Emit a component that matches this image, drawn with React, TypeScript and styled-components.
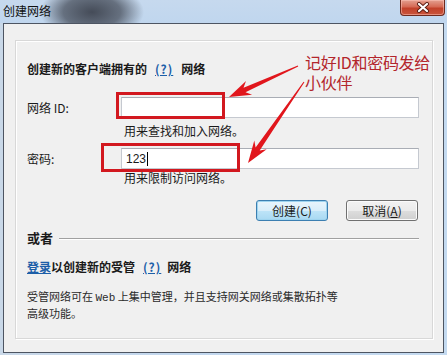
import styled, { createGlobalStyle } from "styled-components";

const GlobalStyle = createGlobalStyle`
  html, body {
    margin: 0;
    padding: 0;
    overflow: hidden;
    background: #c4d9ef;
  }
`;

const Window = styled.div`
  position: relative;
  width: 447px;
  height: 355px;
  display: flex;
  flex-direction: column;
  background: linear-gradient(90deg, #c9d8e8 0%, #c2d7ee 40%, #c4daf0 100%);
  font-family: "Noto Sans CJK SC", "Noto Sans", sans-serif;
  font-size: 12px;
  color: #1a1a1a;
  overflow: hidden;
`;

const TitleBar = styled.div`
  height: 23px;
  flex-shrink: 0;
  display: flex;
  justify-content: space-between;
  align-items: flex-start;
  background:
    radial-gradient(ellipse 52px 28px at 92px 12px, rgba(62, 68, 80, 0.95), rgba(62, 68, 80, 0.7) 55%, rgba(62, 68, 80, 0) 100%),
    linear-gradient(180deg, #c6d9ee 0%, #c0d6ee 100%);
`;

const Title = styled.span`
  padding: 3px 0 0 3px;
  font-size: 12px;
  line-height: 16px;
  color: #111;
`;

const CloseButton = styled.div`
  width: 45px;
  height: 16px;
  margin-right: 2px;
  box-sizing: border-box;
  border: 1px solid #6e2a1e;
  border-top: none;
  border-radius: 0 0 4px 4px;
  background: linear-gradient(180deg, #e4a090 0%, #d66a55 45%, #c2412a 55%, #c9553c 100%);
  display: flex;
  align-items: center;
  justify-content: center;
  box-shadow: inset 0 0 0 1px rgba(255, 200, 190, 0.5);
`;

const Frame = styled.div`
  flex: 1;
  display: flex;
  padding: 0 3px 2px 3px;
`;

const Client = styled.div`
  flex: 1;
  display: flex;
  border: 1px solid #4d5562;
  background: #f0f0f0;
  padding: 16px 10px 13px 11px;
`;

const Panel = styled.div`
  flex: 1;
  display: flex;
  flex-direction: column;
  border: 1px solid #d8d8d8;
  box-shadow: inset 1px 1px 0 #ffffff, 1px 1px 0 #ffffff;
  padding: 20px 13px 0 11px;
`;

const Heading = styled.div`
  font-weight: bold;
  line-height: 16px;
  display: flex;
  align-items: center;
  gap: 6px;
`;

const HelpLink = styled.span<{ $left?: number; $right?: number }>`
  color: #1c5ea8;
  text-decoration: underline;
  font-weight: bold;
  letter-spacing: 1px;
  margin: 0 ${(p) => p.$right ?? 2}px 0 ${(p) => p.$left ?? 2}px;
`;

const FormRow = styled.div<{ $top: number }>`
  display: grid;
  grid-template-columns: 94px 1fr;
  align-items: center;
  margin-top: ${(p) => p.$top}px;
`;

const Label = styled.span`
  line-height: 16px;
`;

const TextInput = styled.div`
  height: 21px;
  box-sizing: border-box;
  background: #fff;
  border: 1px solid #c5c9d0;
  border-top-color: #a9adb5;
  padding-left: 4px;
  display: flex;
  align-items: center;
  font-family: "Liberation Sans", "Noto Sans CJK SC", sans-serif;
  font-size: 12px;
`;

const Caret = styled.span`
  display: inline-block;
  width: 1px;
  height: 14px;
  background: #000;
  margin-left: 1px;
`;

const Helper = styled.div<{ $top: number }>`
  margin: ${(p) => p.$top}px 0 0 97px;
  line-height: 16px;
`;

const ButtonRow = styled.div`
  display: flex;
  justify-content: flex-end;
  gap: 18px;
  margin: 14px 1px 0 0;
`;

const Button = styled.div<{ $primary?: boolean }>`
  width: 72px;
  height: 21px;
  box-sizing: border-box;
  border-radius: 3px;
  display: flex;
  align-items: center;
  justify-content: center;
  font-size: 12px;
  border: 1px solid ${(p) => (p.$primary ? "#3c7fb1" : "#707070")};
  background: ${(p) =>
    p.$primary
      ? "linear-gradient(180deg, #e9f5fc 0%, #d9eefa 50%, #bee4f8 51%, #a8d9f2 100%)"
      : "linear-gradient(180deg, #f2f2f2 0%, #ebebeb 50%, #dddddd 51%, #cfcfcf 100%)"};
  box-shadow: inset 0 0 0 1px ${(p) => (p.$primary ? "#9fd4ef" : "#fbfbfb")};
`;

const Divider = styled.div`
  display: flex;
  align-items: center;
  gap: 6px;
  margin-top: 9px;
  line-height: 16px;
  font-weight: bold;
  font-size: 13px;
`;

const DividerLine = styled.div`
  flex: 1;
  height: 1px;
  background: #a0a0a0;
  box-shadow: 0 1px 0 #ffffff;
`;

const LoginLine = styled.div`
  margin-top: 13px;
  line-height: 16px;
  font-weight: bold;
  display: flex;
  align-items: center;
`;

const LoginLink = styled.span`
  color: #1c5ea8;
  text-decoration: underline;
`;

const Description = styled.div`
  margin-top: 14px;
  line-height: 15px;
  font-size: 11px;
  color: #2a2a2a;
`;

const Mono = styled.span`
  font-family: "Liberation Mono", monospace;
  font-size: 11px;
`;

const RedBox = styled.div<{ $x: number; $y: number; $w: number; $h: number }>`
  position: absolute;
  left: ${(p) => p.$x}px;
  top: ${(p) => p.$y}px;
  width: ${(p) => p.$w}px;
  height: ${(p) => p.$h}px;
  box-sizing: border-box;
  border: 3px solid #d2181f;
  pointer-events: none;
`;

const Note = styled.div`
  position: absolute;
  left: 305px;
  top: 52px;
  font-family: "Noto Sans CJK SC", sans-serif;
  font-size: 16px;
  line-height: 20px;
  color: #b3262c;
  letter-spacing: -0.3px;
`;

const ArrowLayer = styled.svg`
  position: absolute;
  left: 0;
  top: 0;
  pointer-events: none;
`;

function arrowPoints(x1: number, y1: number, x2: number, y2: number) {
  const dx = x2 - x1;
  const dy = y2 - y1;
  const len = Math.hypot(dx, dy);
  const ux = dx / len;
  const uy = dy / len;
  const px = -uy;
  const py = ux;
  const headLen = 22;
  const neckLen = 17;
  const headW = 15;
  const neckW = 5;
  const tailW = 1;
  const bx = x2 - ux * headLen;
  const by = y2 - uy * headLen;
  const nx = x2 - ux * neckLen;
  const ny = y2 - uy * neckLen;
  const pts = [
    [x1 + (px * tailW) / 2, y1 + (py * tailW) / 2],
    [nx + (px * neckW) / 2, ny + (py * neckW) / 2],
    [bx + (px * headW) / 2, by + (py * headW) / 2],
    [x2, y2],
    [bx - (px * headW) / 2, by - (py * headW) / 2],
    [nx - (px * neckW) / 2, ny - (py * neckW) / 2],
    [x1 - (px * tailW) / 2, y1 - (py * tailW) / 2],
  ];
  return pts.map((p) => `${p[0].toFixed(1)},${p[1].toFixed(1)}`).join(" ");
}

export default function App() {
  return (
    <Window>
      <GlobalStyle />
      <TitleBar>
        <Title>创建网络</Title>
        <CloseButton>
          <svg width="14" height="11" viewBox="0 0 14 11">
            <path d="M3 2 L11 9 M11 2 L3 9" stroke="#5a1c12" strokeWidth="4" strokeLinecap="round" />
            <path d="M3 2 L11 9 M11 2 L3 9" stroke="#ffffff" strokeWidth="2.2" strokeLinecap="round" />
          </svg>
        </CloseButton>
      </TitleBar>
      <Frame>
        <Client>
          <Panel>
            <Heading>
              <span>创建新的客户端拥有的</span>
              <HelpLink>(?)</HelpLink>
              <span>网络</span>
            </Heading>

            <FormRow $top={20}>
              <Label>网络 ID:</Label>
              <TextInput />
            </FormRow>
            <Helper $top={5}>用来查找和加入网络。</Helper>

            <FormRow $top={9}>
              <Label>密码:</Label>
              <TextInput>
                123
                <Caret />
              </TextInput>
            </FormRow>
            <Helper $top={1}>用来限制访问网络。</Helper>

            <ButtonRow>
              <Button $primary>创建(C)</Button>
              <Button>
                取消(<u>A</u>)
              </Button>
            </ButtonRow>

            <Divider>
              <span>或者</span>
              <DividerLine />
            </Divider>

            <LoginLine>
              <LoginLink>登录</LoginLink>
              <span>以创建新的受管</span>
              <HelpLink $left={8} $right={6}>
                (?)
              </HelpLink>
              <span>网络</span>
            </LoginLine>

            <Description>
              受管网络可在 <Mono>Web</Mono> 上集中管理，并且支持网关网络或集散拓扑等
              <br />
              高级功能。
            </Description>
          </Panel>
        </Client>
      </Frame>

      <RedBox $x={116} $y={92} $w={109} $h={27} />
      <RedBox $x={101} $y={143} $w={139} $h={29} />

      <ArrowLayer width="447" height="355" viewBox="0 0 447 355">
        <polygon points={arrowPoints(298, 66, 229, 97)} fill="#e1161c" />
        <polygon points={arrowPoints(304, 82, 248, 163)} fill="#e1161c" />
      </ArrowLayer>

      <Note>
        记好ID和密码发给
        <br />
        小伙伴
      </Note>
    </Window>
  );
}
